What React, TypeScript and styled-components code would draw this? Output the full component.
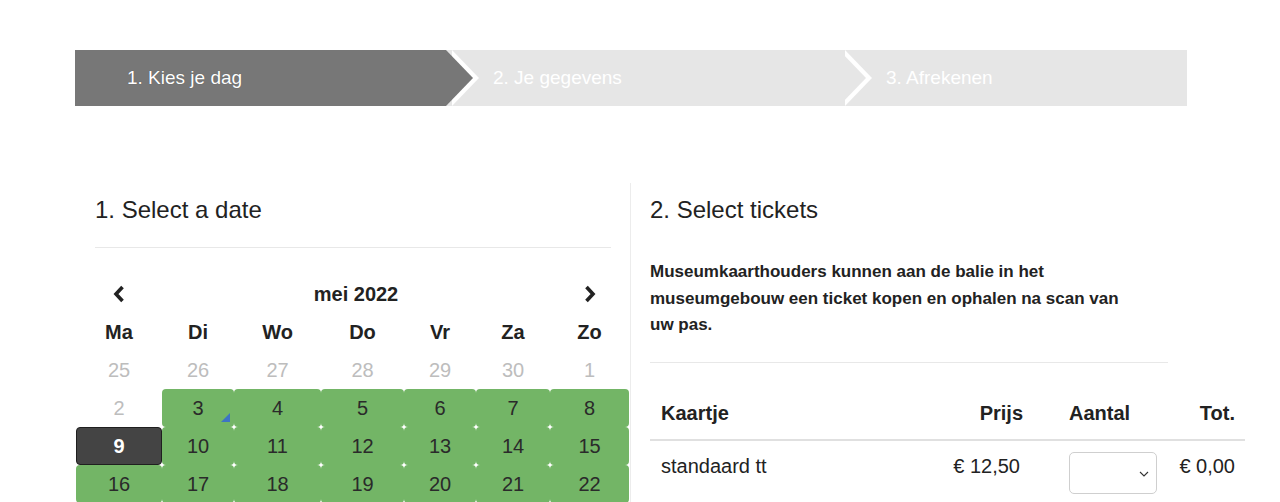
import React from 'react';
import styled, { createGlobalStyle, css } from 'styled-components';

const GlobalStyle = createGlobalStyle`
  html, body {
    margin: 0;
    padding: 0;
    background: #fff;
  }
  body {
    font-family: "Liberation Sans", Arial, Helvetica, sans-serif;
    color: #222;
    overflow: hidden;
  }
  * {
    box-sizing: border-box;
  }
`;

const Page = styled.div`
  width: 1112px;
  margin-left: 75px;
  padding-top: 50px;
`;

// ---- step indicator ----

const Steps = styled.ol`
  display: flex;
  height: 56px;
  margin: 0;
  padding: 0;
  list-style: none;
`;

const Step = styled.li<{ $active?: boolean; $width?: number; $last?: boolean }>`
  position: relative;
  display: flex;
  align-items: center;
  flex: ${props => (props.$width ? `0 0 ${props.$width}px` : '1 1 auto')};
  height: 56px;
  padding-left: 47px;
  font-size: 19px;
  color: #fff;
  background: ${props => (props.$active ? '#777777' : '#e6e6e6')};
  ${props => props.$active && css`
    text-shadow: 0 0 1px rgba(0, 0, 0, 0.35);
  `}

  &:first-child {
    padding-left: 52px;
  }

  ${props => !props.$last && css`
    &::before,
    &::after {
      content: '';
      position: absolute;
      top: 0;
      width: 0;
      height: 0;
      border-top: 28px solid transparent;
      border-bottom: 28px solid transparent;
    }
    &::before {
      right: -33px;
      border-left: 27px solid #fff;
      z-index: 1;
    }
    &::after {
      right: -27px;
      border-left: 27px solid ${props.$active ? '#777777' : '#e6e6e6'};
      z-index: 2;
    }
  `}
`;

// ---- columns ----

const Columns = styled.div`
  display: grid;
  grid-template-columns: 555px 557px;
  margin-top: 77px;
`;

const Column = styled.section<{ $divider?: boolean }>`
  padding: 12px 19px 0 ${props => (props.$divider ? '19px' : '20px')};
  border-left: ${props => (props.$divider ? '1px solid #ececec' : 'none')};
  min-width: 0;
`;

const Heading = styled.h2`
  margin: 0;
  font-size: 24px;
  line-height: 30px;
  font-weight: 400;
  color: #222;
`;

const Rule = styled.hr<{ $gap: number }>`
  margin: ${props => props.$gap}px 0 0;
  border: 0;
  border-top: 1px solid #e8e8e8;
`;

// ---- calendar ----

const Calendar = styled.div`
  display: grid;
  grid-template-columns: 86px 72px 87px 83px 72px 74px 79px;
  grid-auto-rows: 38px;
  width: 553px;
  margin: 27px 0 0 -19px;
  font-size: 20px;
`;

const NavButton = styled.button<{ $col: number }>`
  grid-column: ${props => props.$col};
  display: flex;
  align-items: center;
  justify-content: center;
  padding: 0;
  border: 0;
  background: none;
  color: #222;
  cursor: pointer;
`;

const MonthTitle = styled.div`
  grid-column: 2 / 7;
  display: flex;
  align-items: center;
  justify-content: center;
  font-weight: 700;
  color: #222;
`;

const DayName = styled.div`
  display: flex;
  align-items: center;
  justify-content: center;
  font-weight: 700;
  color: #222;
`;

type DayState = 'muted' | 'available' | 'selected';

const DayCell = styled.div<{ $state: DayState }>`
  position: relative;
  display: flex;
  align-items: center;
  justify-content: center;
  border-radius: 4px;
  ${props => props.$state === 'muted' && css`
    color: #bdbdbd;
  `}
  ${props => props.$state === 'available' && css`
    background: #73b566;
    color: #2a2a2a;
  `}
  ${props => props.$state === 'selected' && css`
    background: #444;
    border: 1px solid #1f1f1f;
    color: #fff;
    font-weight: 700;
  `}
`;

const TodayMark = styled.span`
  position: absolute;
  right: 4px;
  bottom: 5px;
  width: 0;
  height: 0;
  border-left: 9px solid transparent;
  border-bottom: 9px solid #3d74c4;
`;

// ---- tickets ----

const Notice = styled.p`
  max-width: 485px;
  margin: 34px 0 0;
  font-size: 17px;
  line-height: 26.5px;
  font-weight: 700;
  color: #222;
`;

const TicketTable = styled.div`
  display: grid;
  grid-template-columns: 300px 108px 110px 77px;
  width: 595px;
  margin-top: 27px;
  font-size: 20px;
  line-height: 28px;
  white-space: nowrap;
`;

const HeadCell = styled.div<{ $align?: 'left' | 'right'; $padRight?: number }>`
  padding: 9px ${props => props.$padRight ?? 11}px 12px 11px;
  font-weight: 700;
  text-align: ${props => props.$align ?? 'left'};
  border-bottom: 2px solid #e0e0e0;
  color: #222;
`;

const BodyCell = styled.div<{ $align?: 'left' | 'right'; $padRight?: number }>`
  padding: 11px ${props => props.$padRight ?? 11}px 11px 0;
  padding-left: ${props => (props.$align === 'right' ? 0 : 11)}px;
  text-align: ${props => props.$align ?? 'left'};
  color: #222;
`;

const SelectWrap = styled.div`
  position: relative;
  width: 88px;
  height: 42px;
`;

const QtySelect = styled.select`
  width: 100%;
  height: 100%;
  padding: 0 24px 0 10px;
  border: 1px solid #cfcfcf;
  border-radius: 5px;
  background: #fff;
  font: inherit;
  appearance: none;
  -webkit-appearance: none;
`;

const SelectArrow = styled.svg`
  position: absolute;
  right: 8px;
  top: 19px;
  pointer-events: none;
`;

const Chevron = ({ dir }: { dir: 'left' | 'right' }) => (
  <svg width="12" height="18" viewBox="0 0 12 18" aria-hidden="true">
    <polyline
      points={dir === 'left' ? '9.5,2 3,9 9.5,16' : '2.5,2 9,9 2.5,16'}
      fill="none"
      stroke="#222"
      strokeWidth="3.6"
      strokeLinejoin="miter"
    />
  </svg>
);

const dayNames = ['Ma', 'Di', 'Wo', 'Do', 'Vr', 'Za', 'Zo'];

interface Day {
  n: number;
  state: DayState;
  today?: boolean;
}

const weeks: Day[][] = [
  [25, 26, 27, 28, 29, 30, 1].map(n => ({ n, state: 'muted' as DayState })),
  [
    { n: 2, state: 'muted' },
    { n: 3, state: 'available', today: true },
    { n: 4, state: 'available' },
    { n: 5, state: 'available' },
    { n: 6, state: 'available' },
    { n: 7, state: 'available' },
    { n: 8, state: 'available' },
  ],
  [
    { n: 9, state: 'selected' },
    ...[10, 11, 12, 13, 14, 15].map(n => ({ n, state: 'available' as DayState })),
  ],
  [16, 17, 18, 19, 20, 21, 22].map(n => ({ n, state: 'available' as DayState })),
];

function App() {
  return (
    <>
      <GlobalStyle />
      <Page>
        <Steps>
          <Step $active $width={371}>1. Kies je dag</Step>
          <Step $width={393}>2. Je gegevens</Step>
          <Step $last>3. Afrekenen</Step>
        </Steps>

        <Columns>
          <Column>
            <Heading>1. Select a date</Heading>
            <Rule $gap={22} />
            <Calendar>
              <NavButton $col={1} aria-label="Vorige maand">
                <Chevron dir="left" />
              </NavButton>
              <MonthTitle>mei 2022</MonthTitle>
              <NavButton $col={7} aria-label="Volgende maand">
                <Chevron dir="right" />
              </NavButton>
              {dayNames.map(d => (
                <DayName key={d}>{d}</DayName>
              ))}
              {weeks.map((week, wi) =>
                week.map(day => (
                  <DayCell key={`${wi}-${day.n}`} $state={day.state}>
                    {day.n}
                    {day.today && <TodayMark />}
                  </DayCell>
                ))
              )}
            </Calendar>
          </Column>

          <Column $divider>
            <Heading>2. Select tickets</Heading>
            <Notice>
              Museumkaarthouders kunnen aan de balie in het museumgebouw een ticket kopen en
              ophalen na scan van uw pas.
            </Notice>
            <Rule $gap={23} />
            <TicketTable>
              <HeadCell>Kaartje</HeadCell>
              <HeadCell $align="right" $padRight={35}>Prijs</HeadCell>
              <HeadCell>Aantal</HeadCell>
              <HeadCell $align="right" $padRight={10}>Tot.</HeadCell>

              <BodyCell>standaard tt</BodyCell>
              <BodyCell $align="right" $padRight={38}>€ 12,50</BodyCell>
              <BodyCell>
                <SelectWrap>
                  <QtySelect defaultValue="" aria-label="Aantal">
                    <option value=""></option>
                    <option value="1">1</option>
                    <option value="2">2</option>
                  </QtySelect>
                  <SelectArrow width="10" height="6" viewBox="0 0 10 6">
                    <polyline points="1,1 5,5 9,1" fill="none" stroke="#333" strokeWidth="1.1" />
                  </SelectArrow>
                </SelectWrap>
              </BodyCell>
              <BodyCell $align="right" $padRight={10}>€ 0,00</BodyCell>
            </TicketTable>
          </Column>
        </Columns>
      </Page>
    </>
  );
}

export default App;
